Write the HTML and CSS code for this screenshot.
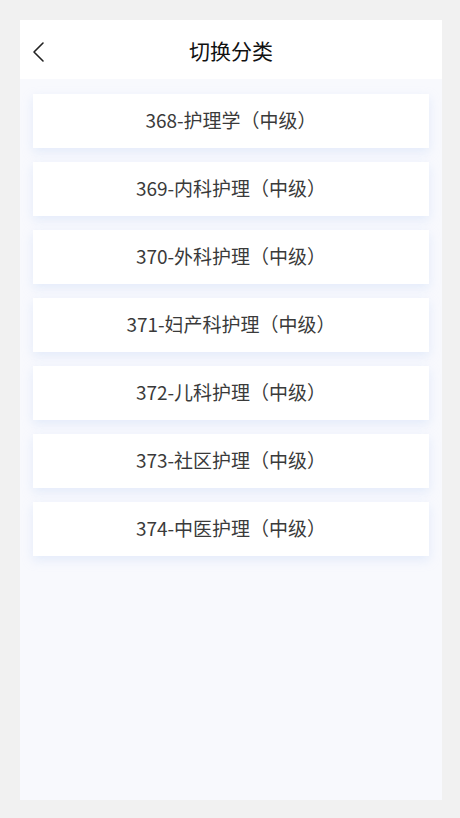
FILE: index.html
```html
<!DOCTYPE html>
<html lang="zh-CN">
<head>
    <meta charset="UTF-8">
    <title>切换分类</title>
    <meta name="viewport" content="width=device-width, initial-scale=1.0">
    <link rel="stylesheet" href="styles.css">
</head>
<body>
    <div class="page">
        <header class="top-bar">
            <a class="back" href="#">
                <svg width="14" height="22" viewBox="0 0 14 22">
                    <path d="M12 2 L3 11 L12 20" fill="none" stroke="#222" stroke-width="1.6" stroke-linecap="round" stroke-linejoin="round"/>
                </svg>
            </a>
            <h1>切换分类</h1>
        </header>

        <ul class="category-list">
            <li>368-护理学（中级）</li>
            <li>369-内科护理（中级）</li>
            <li>370-外科护理（中级）</li>
            <li>371-妇产科护理（中级）</li>
            <li>372-儿科护理（中级）</li>
            <li>373-社区护理（中级）</li>
            <li>374-中医护理（中级）</li>
        </ul>
    </div>
</body>
</html>
```

FILE: styles.css
```css
html, body {
    margin: 0;
    height: 100%;
}

body {
    background: #f1f1f1;
    font-family: "Noto Sans CJK SC", "Noto Sans", sans-serif;
    padding: 20px 18px 18px 20px;
    box-sizing: border-box;
}

.page {
    height: 100%;
    background: #f8f9fd;
    display: flex;
    flex-direction: column;
}

.top-bar {
    position: relative;
    height: 59px;
    background: #fff;
    display: flex;
    align-items: center;
    justify-content: center;
}

.back {
    position: absolute;
    left: 11px;
    top: 21px;
    display: block;
    line-height: 0;
}

.top-bar h1 {
    margin: 0;
    font-size: 21px;
    font-weight: 400;
    color: #111;
    padding-top: 1px;
}

.category-list {
    list-style: none;
    margin: 0;
    padding: 15px 13px;
    display: flex;
    flex-direction: column;
    gap: 14px;
}

.category-list li {
    height: 54px;
    box-sizing: border-box;
    padding-bottom: 4px;
    background: #fff;
    display: flex;
    align-items: center;
    justify-content: center;
    font-size: 19px;
    color: #3a3a3a;
    box-shadow: 0 4px 10px rgba(190, 210, 245, 0.35);
}
```
